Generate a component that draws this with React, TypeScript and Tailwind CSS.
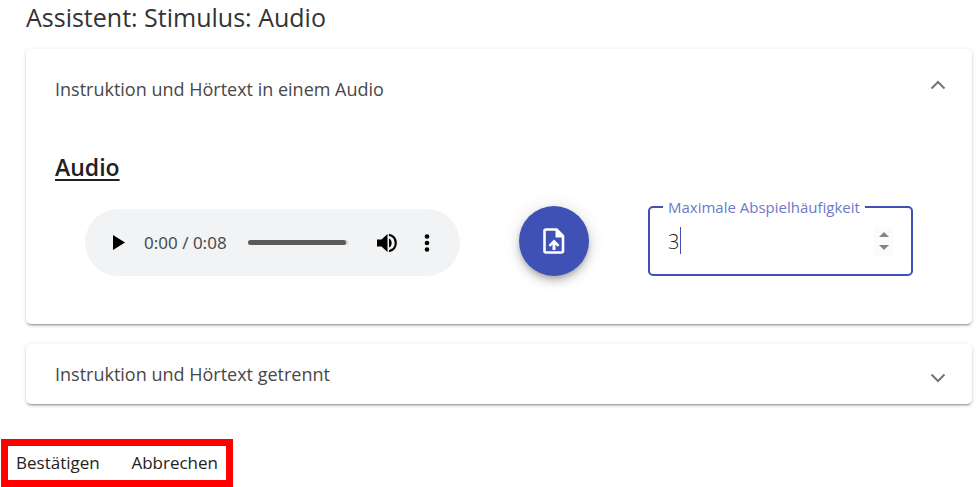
import { useState } from "react";

function Chevron({ up = false }: { up?: boolean }) {
  return (
    <svg width="16" height="10" viewBox="0 0 16 10" fill="none" stroke="#757575" strokeWidth="2" aria-hidden="true">
      <path d={up ? "M1.5 8.5 8 2l6.5 6.5" : "M1.5 1.5 8 8l6.5-6.5"} />
    </svg>
  );
}

const card =
  "rounded-[5px] bg-white shadow-[0_3px_1px_-2px_rgba(0,0,0,0.2),0_2px_2px_0_rgba(0,0,0,0.14),0_1px_5px_0_rgba(0,0,0,0.12)]";

function AudioPlayer() {
  return (
    <div className="ml-[30px] flex h-[67px] w-[375px] items-center rounded-full bg-[#f1f3f4] px-7">
      <button type="button" aria-label="Abspielen" className="flex">
        <svg width="12" height="15" viewBox="0 0 12 15" aria-hidden="true">
          <path d="M0 0v15l12-7.5z" />
        </svg>
      </button>
      <span className="ml-[19px] w-[88px] whitespace-nowrap font-['Noto_Sans',sans-serif] text-[17px] leading-6 text-[#4a4d51]">
        0:00 / 0:08
      </span>
      <div className="ml-4 h-[5px] w-[100px] rounded-full bg-[#cfd0d1] pr-0.5">
        <div className="h-full rounded-full bg-[#5a5a5a]" />
      </div>
      <button type="button" aria-label="Lautstärke" className="ml-[29px] flex">
        <svg width="20" height="20" viewBox="0 0 20 20" aria-hidden="true">
          <path d="M0 6.5v7h4.500l6 5.500V1l-6 5.500z" />
          <path d="M12 5.500c3.600 1.600 3.600 7.400 0 9z" />
          <path d="M12 1.800c9 2.400 9 14 0 16.400" fill="none" stroke="#000" strokeWidth="2.200" />
        </svg>
      </button>
      <button type="button" aria-label="Weitere Optionen" className="ml-[27px] flex">
        <svg width="6" height="18" viewBox="0 0 6 18" aria-hidden="true">
          <circle cx="3" cy="2.500" r="2.300" />
          <circle cx="3" cy="9" r="2.300" />
          <circle cx="3" cy="15.500" r="2.300" />
        </svg>
      </button>
    </div>
  );
}

function PlayCountField() {
  const [count, setCount] = useState(3);
  return (
    <fieldset className="relative -mt-[7px] h-[77px] w-[265px] min-w-0 rounded-[5px] border-2 border-[#3f51b5] pl-[18px]">
      <legend className="-ml-[5px] px-[5px]">
        <label htmlFor="count" className="block whitespace-nowrap text-[15px] leading-4 text-[#6c7ac8]">
          Maximale Abspielhäufigkeit
        </label>
      </legend>
      <div className="mt-2 flex h-9 items-center pr-[18px]">
        <input
          id="count"
          type="number"
          value={count}
          onChange={(e) => setCount(Number(e.target.value))}
          className="h-9 w-0 min-w-0 grow bg-transparent text-xl font-light text-[#212121] outline-none [appearance:textfield] [&::-webkit-inner-spin-button]:appearance-none"
        />
        <span className="flex h-[29px] w-[19px] flex-col items-center justify-center gap-2 bg-[#fbfbfb]">
          <button type="button" aria-label="Erhöhen" className="flex" onClick={() => setCount(count + 1)}>
            <svg width="10" height="5" viewBox="0 0 10 5" fill="#858585" aria-hidden="true">
              <path d="M0 5 5 0l5 5z" />
            </svg>
          </button>
          <button type="button" aria-label="Verringern" className="flex" onClick={() => setCount(count - 1)}>
            <svg width="10" height="5" viewBox="0 0 10 5" fill="#858585" aria-hidden="true">
              <path d="M0 0l5 5 5-5z" />
            </svg>
          </button>
        </span>
      </div>
      <span className="absolute left-[30px] top-3 h-[27px] w-px bg-[#3f51b5]" />
    </fieldset>
  );
}

export default function App() {
  return (
    <main className="bg-white font-['Open_Sans',sans-serif] text-[#212121]">
      <h1 className="pl-[26px] text-[25px] leading-[34px] text-[#333333]">Assistent: Stimulus: Audio</h1>

      <div className="ml-[26px] mr-[7px] mt-[15px] flex flex-col gap-5">
        <section className={`${card} pb-12`}>
          <button type="button" aria-expanded="true" className="flex h-20 w-full items-center justify-between pl-[29px] pr-[26px]">
            <span className="text-lg leading-6 text-[#484848]">Instruktion und Hörtext in einem Audio</span>
            <span className="pb-2">
              <Chevron up />
            </span>
          </button>
          <div className="pl-[29px] pt-[22px]">
            <h2 className="text-[23px] font-semibold leading-8 underline decoration-2 underline-offset-[3px]">Audio</h2>
            <div className="mt-[23px] flex items-start">
              <div className="pt-[3px]">
                <AudioPlayer />
              </div>
              <button
                type="button"
                aria-label="Datei hochladen"
                className="mx-[59px] flex size-[70px] shrink-0 items-center justify-center rounded-full bg-[#3f51b5] shadow-[0_3px_5px_-1px_rgba(0,0,0,0.2),0_6px_10px_0_rgba(0,0,0,0.14),0_1px_18px_0_rgba(0,0,0,0.12)]"
              >
                <svg width="22" height="26" viewBox="0 0 22 26" aria-hidden="true">
                  <path d="M3 1.500h10.500l6.500 6.500v15q0 1.500-1.500 1.500h-15.500q-1.500 0-1.500-1.500v-20q0-1.500 1.500-1.500z" fill="none" stroke="#fff" strokeWidth="2.600" strokeLinejoin="round" />
                  <path d="M12.500 2v7.500h7.500v-2l-5.500-5.500z" fill="#fff" />
                  <path d="M11 11.500l5.500 5.500-1.800 1.800-2.200-2.200v5.400h-3v-5.400l-2.200 2.200-1.800-1.800z" fill="#fff" />
                </svg>
              </button>
              <PlayCountField />
            </div>
          </div>
        </section>

        <section className={card}>
          <button type="button" aria-expanded="false" className="flex h-[60px] w-full items-center justify-between pl-[29px] pr-[26px]">
            <span className="text-lg leading-6 text-[#484848]">Instruktion und Hörtext getrennt</span>
            <span className="pt-2">
              <Chevron />
            </span>
          </button>
        </section>
      </div>

      <div className="ml-px mt-[35px] flex h-12 w-[232px] items-center justify-between border-[7px] border-[#ff0000] px-2 text-[17px] leading-6 text-[#222222]">
        <button type="button">Bestätigen</button>
        <button type="button">Abbrechen</button>
      </div>
    </main>
  );
}
